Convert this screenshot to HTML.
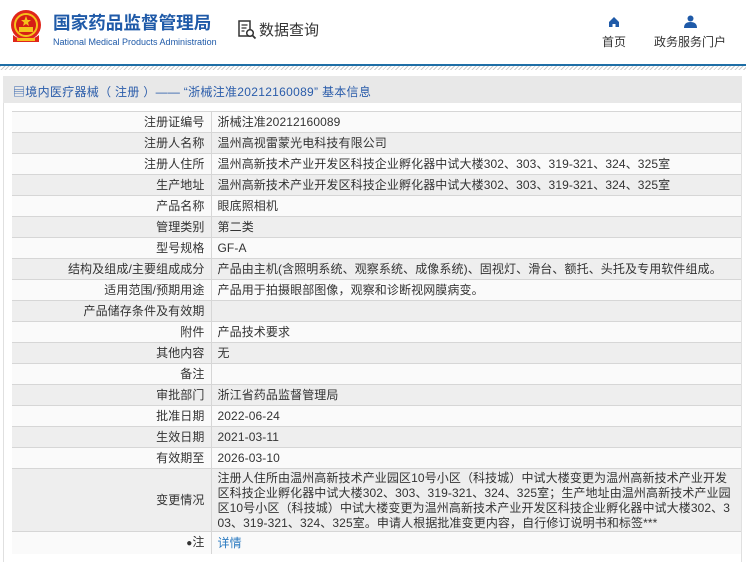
<!DOCTYPE html>
<html><head><meta charset="utf-8"><style>
*{margin:0;padding:0;box-sizing:border-box}
body{width:746px;height:562px;overflow:hidden;background:#fff;font-family:"Liberation Sans","Noto Sans CJK SC",sans-serif;font-size:12px;color:#333;position:relative}
.a{position:absolute;white-space:nowrap}
table{position:absolute;left:12px;top:111px;width:729px;border-collapse:collapse}
td{border-top:1px solid #d6d6d6;height:21px;padding:0 6px;line-height:20px;letter-spacing:0.1px}
td.l{width:199px;text-align:right;border-right:1px solid #d6d6d6}
tr:nth-child(even) td{background:#eeeeee}
tr:nth-child(odd) td{background:#fafafa}
</style></head><body>
<svg class="a" style="left:9px;top:9px" width="34" height="37" viewBox="0 0 34 37">
<circle cx="17" cy="16" r="15" fill="#e0261b"/><circle cx="17" cy="16" r="11" fill="#d51e15" stroke="#f5c21b" stroke-width="2"/>
<polygon points="17,7 18.5,11 22,11 19,13.5 20,17 17,15 14,17 15,13.5 12,11 15.5,11" fill="#f5c21b"/>
<rect x="10" y="18" width="14" height="5" fill="#f5c21b"/>
<path d="M4 26 Q17 36 30 26 L30 33 L4 33Z" fill="#e0261b"/><rect x="8" y="29" width="18" height="3" fill="#f5c21b"/>
</svg>
<div class="a" style="left:53px;top:10px;font-size:17.6px;font-weight:bold;color:#1f5aa8">国家药品监督管理局</div>
<div class="a" style="left:53px;top:37px;font-size:9px;color:#1f5aa8">National Medical Products Administration</div>
<svg class="a" style="left:238px;top:20px" width="20" height="20" viewBox="0 0 20 20"><rect x="1" y="1" width="11" height="15" fill="none" stroke="#333" stroke-width="1.5"/><path d="M3.5 5h6M3.5 8h5M3.5 11h3" stroke="#333" stroke-width="1.2"/><circle cx="12" cy="13" r="3.3" fill="#fff" stroke="#333" stroke-width="1.5"/><path d="M14.5 15.5l3 3" stroke="#333" stroke-width="1.8"/></svg>
<div class="a" style="left:259px;top:19px;font-size:15px;color:#333">数据查询</div>
<svg class="a" style="left:608px;top:16px" width="12" height="12" viewBox="0 0 12 12"><path d="M6 1L11 6V11H1V6Z" fill="#1f5aa8"/><rect x="4.5" y="8" width="3" height="3" fill="#fff"/></svg>
<div class="a" style="left:602px;top:33px;font-size:12px">首页</div>
<svg class="a" style="left:684px;top:15px" width="13" height="13" viewBox="0 0 13 13"><circle cx="6.5" cy="3.5" r="3" fill="#1f5aa8"/><path d="M0 13Q0 7 6.5 7Q13 7 13 13Z" fill="#1f5aa8"/></svg>
<div class="a" style="left:654px;top:33px;font-size:12px">政务服务门户</div>
<div class="a" style="left:0;top:64px;width:746px;height:2px;background:#1e6ea6"></div>
<div class="a" style="left:0;top:66px;width:746px;height:4px;background:repeating-linear-gradient(135deg,#ccc 0 1px,#fff 1px 3px)"></div>
<div class="a" style="left:3px;top:76px;width:739px;height:486px;border:1px solid #e0e0e0;border-bottom:none"></div>
<div class="a" style="left:3px;top:76px;width:739px;height:27px;background:#e8e8e8"></div>
<div class="a" style="left:13px;top:83px;color:#2a5caa;font-size:12px;letter-spacing:0.3px">▤境内医疗器械（ 注册 ）—— “浙械注准20212160089” 基本信息</div>
<div class="a" style="left:12px;top:111px;width:729px;height:443px;border:1px solid #d6d6d6;border-top:none"></div>
<table>
<tr><td class="l">注册证编号</td><td>浙械注准20212160089</td></tr>
<tr><td class="l">注册人名称</td><td>温州高视雷蒙光电科技有限公司</td></tr>
<tr><td class="l">注册人住所</td><td>温州高新技术产业开发区科技企业孵化器中试大楼302、303、319-321、324、325室</td></tr>
<tr><td class="l">生产地址</td><td>温州高新技术产业开发区科技企业孵化器中试大楼302、303、319-321、324、325室</td></tr>
<tr><td class="l">产品名称</td><td>眼底照相机</td></tr>
<tr><td class="l">管理类别</td><td>第二类</td></tr>
<tr><td class="l">型号规格</td><td>GF-A</td></tr>
<tr><td class="l">结构及组成/主要组成成分</td><td>产品由主机(含照明系统、观察系统、成像系统)、固视灯、滑台、额托、头托及专用软件组成。</td></tr>
<tr><td class="l">适用范围/预期用途</td><td>产品用于拍摄眼部图像，观察和诊断视网膜病变。</td></tr>
<tr><td class="l">产品储存条件及有效期</td><td></td></tr>
<tr><td class="l">附件</td><td>产品技术要求</td></tr>
<tr><td class="l">其他内容</td><td>无</td></tr>
<tr><td class="l">备注</td><td></td></tr>
<tr><td class="l">审批部门</td><td>浙江省药品监督管理局</td></tr>
<tr><td class="l">批准日期</td><td>2022-06-24</td></tr>
<tr><td class="l">生效日期</td><td>2021-03-11</td></tr>
<tr><td class="l">有效期至</td><td>2026-03-10</td></tr>
<tr><td class="l" style="height:63px">变更情况</td><td style="line-height:15px;white-space:nowrap;padding-top:1px">注册人住所由温州高新技术产业园区10号小区（科技城）中试大楼变更为温州高新技术产业开发<br>区科技企业孵化器中试大楼302、303、319-321、324、325室；生产地址由温州高新技术产业园<br>区10号小区（科技城）中试大楼变更为温州高新技术产业开发区科技企业孵化器中试大楼302、3<br>03、319-321、324、325室。申请人根据批准变更内容，自行修订说明书和标签***</td></tr>
<tr><td class="l"><span style="font-size:10px">●</span>注</td><td style="color:#2a7ac0">详情</td></tr>
</table>
</body></html>
